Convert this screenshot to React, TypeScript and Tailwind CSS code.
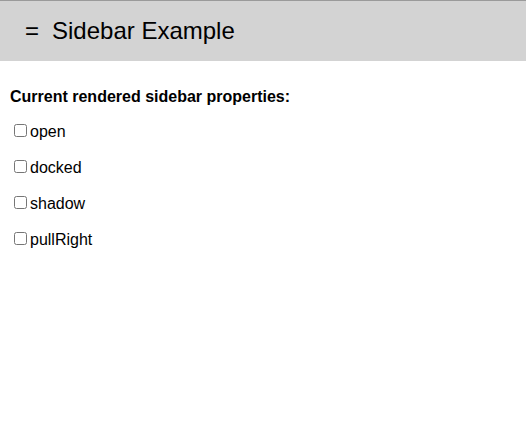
import React from "react";

export default function App() {
  const props = ["open", "docked", "shadow", "pullRight"];
  return (
    <div className="w-[526px] h-[427px] bg-white text-black" style={{ fontFamily: '"Liberation Sans", Arial, sans-serif' }}>
      <div className="h-[61px] border-t border-[#9a9a9a] bg-[#d3d3d3] flex items-center pl-4 text-[24px] leading-[28px]">
        <span className="ml-[9px] w-[14px]">=</span>
        <span className="ml-[13px]">Sidebar Example</span>
      </div>
      <div className="px-[10px] pt-[11px]">
        <p className="my-4 text-[16px] leading-[18px] font-bold">Current rendered sidebar properties:</p>
        {props.map((p) => (
          <p key={p} className="my-4 text-[16px] leading-[20px] flex items-baseline">
            <input type="checkbox" className="w-[13px] h-[13px] ml-1 mr-[3px] mt-[2px] mb-1 self-start" />
            <span>{p}</span>
          </p>
        ))}
      </div>
    </div>
  );
}
